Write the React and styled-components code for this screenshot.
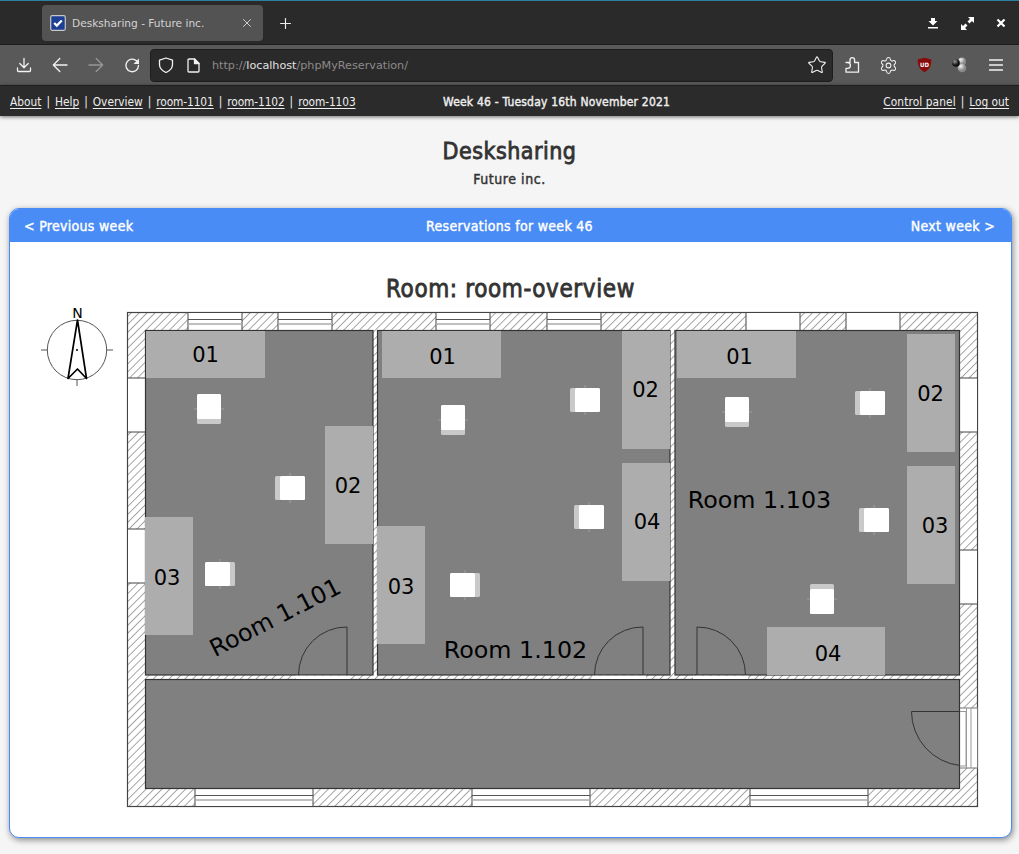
import React from "react";
import styled, { createGlobalStyle } from "styled-components";
import { X, Plus, Star, Settings } from "lucide-react";

const Global = createGlobalStyle`
  html, body { margin: 0; padding: 0; height: 100%; background: #f5f5f5; overflow: hidden; }
  body { font-family: "DejaVu Sans Condensed", "DejaVu Sans", sans-serif; font-stretch: condensed; }
`;
const Page = styled.div`display: flex; flex-direction: column; width: 1019px; height: 854px; overflow: hidden;`;
const TopLine = styled.div`height: 1px; background: #2d7f9f;`;
const TabStrip = styled.div`
  height: 44px; background: #2b2a2a; display: flex; align-items: center; padding: 0 1px 0 42px; flex-shrink: 0; box-sizing: border-box;
  border-bottom: 1px solid #1d1d1d;
`;
const Tab = styled.div`
  width: 221px; height: 36px; margin-top: 1px; background: #535353; border-radius: 4px; display: flex; align-items: center; padding: 0 9px 0 8px;
  box-sizing: border-box; color: #d4d4d4; font: 10.6px "DejaVu Sans", sans-serif;
`;
const TabTitle = styled.span`margin-left: 6px; flex: 1; white-space: nowrap;`;
const NewTab = styled.div`margin-left: 14px; margin-top: 1px; color: #eee; display: flex;`;
const WindowButtons = styled.div`margin-left: auto; margin-top: 1px; display: flex; align-items: center;`;
const WindowButton = styled.div`width: 34px; display: flex; justify-content: center;`;
const Toolbar = styled.div`
  height: 40px; background: #595959; display: flex; align-items: center; padding: 0 6px; flex-shrink: 0; color: #f2f2f2; box-sizing: border-box;
`;
const ToolButton = styled.div`
  width: ${(p) => p.$w || 36}px; display: flex; justify-content: center; flex-shrink: 0; opacity: ${(p) => (p.$dim ? 0.4 : 1)};
`;
const UrlBar = styled.div`
  width: 683px; height: 33px; box-sizing: border-box; background: #2b2a2a; border: 1px solid #1d1d1d; border-radius: 4px;
  display: flex; align-items: center; padding: 0 5px 0 6px; color: #f2f2f2; flex-shrink: 0;
`;
const UrlText = styled.span`
  margin-left: 1px; flex: 1; font: 11.2px "DejaVu Sans", sans-serif; color: #8b8b8b; white-space: nowrap;
  b { color: #e2e2e2; font-weight: 400; }
`;
const Extensions = styled.div`display: flex; align-items: center; margin-left: 1px;`;
const NavBar = styled.header`
  height: 31px; background: #2b2b2b; color: #eee; display: grid; grid-template-columns: 433px auto 1fr; align-items: center; padding: 2px 10px 0;
  font-size: 11.8px; box-shadow: 0 1px 4px rgba(0,0,0,.55); flex-shrink: 0; border-top: 1px solid #1d1d1d; box-sizing: border-box; position: relative;
`;
const NavGroup = styled.nav`display: flex; gap: 5px; justify-content: ${(p) => (p.$end ? "flex-end" : "flex-start")}; white-space: nowrap;`;
const NavLink = styled.a`color: #eee; text-decoration: underline; text-underline-offset: 2px; letter-spacing: ${(p) => p.$track || 0}px;`;
const NavCenter = styled.div`font-size: 12px; letter-spacing: .2px; -webkit-text-stroke: .4px currentColor; white-space: nowrap;`;
const Heading = styled.div`text-align: center; color: #333; padding-top: 21px; height: 92px; box-sizing: border-box; flex-shrink: 0;`;
const Title = styled.h1`margin: 0; font-size: 23px; line-height: 28px; font-weight: 400; letter-spacing: .5px; -webkit-text-stroke: .8px currentColor;`;
const Subtitle = styled.h2`margin: 5px 0 0; font-size: 14px; line-height: 18px; font-weight: 400; letter-spacing: .55px; -webkit-text-stroke: .45px currentColor;`;
const Card = styled.section`
  margin: 0 7px 0 9px; height: 630px; background: #fff; border: 1.5px solid #4a8cf5; border-radius: 10px; overflow: hidden; flex-shrink: 0;
  box-shadow: 1px 2px 6px rgba(0,0,0,.45); box-sizing: border-box; display: flex; flex-direction: column;
`;
const CardBar = styled.div`
  height: 33px; background: #4a8cf5; color: #fff; display: grid; grid-template-columns: 1fr auto 1fr; align-items: center; padding: 0 16px 0 14px;
  font-size: 14px; letter-spacing: .3px; -webkit-text-stroke: .4px currentColor; flex-shrink: 0;
`;
const BarRight = styled.span`text-align: right;`;
const RoomTitle = styled.h3`margin: 33px 0 0; text-align: center; font-size: 24px; line-height: 28px; font-weight: 400; letter-spacing: .6px; -webkit-text-stroke: .8px currentColor; color: #333;`;
const Plan = styled.svg`display: block; width: 945px; height: 510px; margin: 2px 0 0 29.500px; flex-shrink: 0; font-stretch: normal;`;

const outerX = 127.5, outerY = 312.5, outerW = 850, outerH = 494;
const rooms = [
  [145.5, 330.5, 227.5, 344.5],
  [377.5, 330.5, 292.5, 344.5],
  [675, 330.5, 284.5, 344.5],
  [145.5, 679.5, 814, 109],
];
const glazedTop = [[188, 54], [278, 54], [436, 54], [547, 54]];
const plainTop = [[746, 54], [846, 54]];
const glazedBottom = [[195, 118], [472, 118], [750, 118]];
const plainLeft = [378, 529];
const plainRight = [378, 550];
const desks = [
  [146, 331, 119, 47, "01", 205.5, 362], [325, 426, 48, 118, "02", 348, 493], [145, 517, 48, 118, "03", 167, 585],
  [382, 331, 119, 47, "01", 442.5, 364], [622, 331, 48, 118, "02", 645.5, 397], [377, 526, 48, 118, "03", 401, 594], [622, 463, 48, 118, "04", 647, 529],
  [677, 331, 119, 47, "01", 739.5, 364], [907, 334, 48, 118, "02", 930.5, 401], [907, 466, 48, 118, "03", 935, 533], [767, 627, 118, 48, "04", 828, 661],
];
const chairs = [
  [197, 394, "b"], [275, 476, "l"], [205, 562, "r"], [441, 405, "b"], [570, 388, "l"], [574, 505, "l"], [450, 573, "r"],
  [725, 397, "b"], [855, 391, "l"], [859, 508, "l"], [810, 584, "t"],
];
const doors = [
  [296, 54, "M298.5 675 A48 48 0 0 1 347 627 V675"],
  [592, 54, "M594.5 675 A48 48 0 0 1 643 627 V675"],
  [693, 55, "M697 675 V627 A48 48 0 0 1 745.5 675"],
];

function Chair({ x, y, side }) {
  const horizontal = side === "l" || side === "r";
  const w = horizontal ? 30 : 24, h = horizontal ? 24 : 30;
  const inner = side === "b" ? [x, y, 24, 25] : side === "t" ? [x, y + 5, 24, 25] : side === "l" ? [x + 5, y, 25, 24] : [x, y, 25, 24];
  const ticks = horizontal
    ? `M${x + 15} ${y - 3}v3M${x + 15} ${y + 24}v3`
    : `M${x - 3} ${y + 15}h3M${x + 24} ${y + 15}h3`;
  return (
    <g>
      <path d={ticks} stroke="#a5a5a5" strokeWidth=".8" />
      <rect x={x} y={y} width={w} height={h} rx="1.5" fill="#c9c9c9" />
      <rect x={inner[0]} y={inner[1]} width={inner[2]} height={inner[3]} rx="1.5" fill="#fff" />
    </g>
  );
}

function GlazedH({ x, w, y }) {
  return (
    <g>
      <rect x={x} y={y} width={w} height="18" fill="#fff" stroke="#444" strokeWidth="1" />
      <path d={`M${x} ${y + 7}H${x + w}`} stroke="#555" strokeWidth="1" />
      <path d={`M${x} ${y + 11.5}H${x + w}`} stroke="#aaa" strokeWidth="1.4" />
    </g>
  );
}

function FloorPlan() {
  return (
    <Plan viewBox="40 305 945 510" role="img" aria-label="Floor plan">
      <defs>
        <pattern id="hatch" width="5.6" height="5.6" patternUnits="userSpaceOnUse" patternTransform="rotate(45)">
          <rect width="5.6" height="5.6" fill="#fff" />
          <path d="M0 0V5.6" stroke="#777" strokeWidth="1.3" />
        </pattern>
      </defs>
      <g stroke="#555" fill="none" strokeWidth="1">
        <circle cx="77" cy="350" r="29.7" />
        <path d="M41 350H47.500M107 350H113M77 380V386" />
      </g>
      <path d="M77.500 320 L68 378.500 L77.500 369 L86.500 378.500 Z" fill="#fff" stroke="#000" strokeWidth="1.7" strokeLinejoin="round" />
      <circle cx="77" cy="350" r="1" fill="#000" />
      <text x="77.500" y="318" textAnchor="middle" fontFamily="DejaVu Sans" fontSize="14" fill="#000">N</text>

      <rect x={outerX} y={outerY} width={outerW} height={outerH} fill="url(#hatch)" stroke="#444" strokeWidth="1.2" />
      {glazedTop.map(([x, w]) => <GlazedH key={x} x={x} w={w} y={312.5} />)}
      {plainTop.map(([x, w]) => <rect key={x} x={x} y="312.5" width={w} height="18" fill="#fff" stroke="#444" />)}
      {glazedBottom.map(([x, w]) => <GlazedH key={x} x={x} w={w} y={788.5} />)}
      {plainLeft.map((y) => <rect key={y} x="127.5" y={y} width="18" height="54" fill="#fff" stroke="#444" />)}
      {plainRight.map((y) => <rect key={y} x="959.5" y={y} width="18" height="54" fill="#fff" stroke="#444" />)}
      <rect x="959.5" y="708" width="18" height="60" fill="#fff" stroke="#777" />
      <path d="M966.5 708V768M971 708V768" stroke="#999" fill="none" />

      {rooms.map(([x, y, w, h]) => <rect key={x + "" + y} x={x} y={y} width={w} height={h} fill="#808080" stroke="#333" strokeWidth="1.2" />)}
      {doors.map(([x, w]) => <rect key={x} x={x} y="675.8" width={w} height="3.2" fill="#fff" />)}
      {desks.map(([x, y, w, h]) => <rect key={x + "-" + y} x={x} y={y} width={w} height={h} fill="#adadad" />)}
      {chairs.map(([x, y, s]) => <Chair key={x} x={x} y={y} side={s} />)}
      <g fill="none" stroke="#333" strokeWidth="1">
        {doors.map(([x, , d]) => <path key={x} d={d} />)}
        <path d="M911.5 711.5H960M911.5 711.500A54.500 54.500 0 0 0 960 765.500" />
      </g>
      <path d="M960 711.500H966V766H960" fill="none" stroke="#999" />
      <g fontFamily="DejaVu Sans" fontSize="21" textAnchor="middle" fill="#000">
        {desks.map(([x, y, , , label, tx, ty]) => <text key={x + "t" + y} x={tx} y={ty}>{label}</text>)}
      </g>
      <g fontFamily="DejaVu Sans" fontSize="23.8" fill="#000">
        <text x="275" y="625.500" textAnchor="middle" transform="rotate(-27 275 617)">Room 1.101</text>
        <text x="515.500" y="658" textAnchor="middle">Room 1.102</text>
        <text x="759.500" y="508" textAnchor="middle">Room 1.103</text>
      </g>
    </Plan>
  );
}

const Favicon = () => (
  <svg width="16" height="16" viewBox="0 0 16 16"><rect x=".7" y=".7" width="14.600" height="14.600" rx="1.500" fill="#1c3f94" stroke="#c8c8c8" strokeWidth="1.200" /><path d="M4.200 8l2.600 2.600L11.800 5.500" stroke="#fff" strokeWidth="2.200" fill="none" /></svg>
);
const PinIcon = () => (
  <svg width="12" height="12" viewBox="0 0 12 12" fill="#fff"><path d="M4 1h4v3h2.500L6 8.500 1.500 4H4zM1 10h10v1.600H1z" /></svg>
);
const ExpandIcon = () => (
  <svg width="13" height="13" viewBox="0 0 13 13" fill="#fff"><path d="M7 0h6v6l-2-2-2.500 2.500-2-2L9 2zM6 13H0V7l2 2 2.500-2.500 2 2L4 11z" /></svg>
);
const CloseIcon = () => (
  <svg width="10" height="10" viewBox="0 0 10 10"><path d="M1.500 1.500l7 7M8.500 1.500l-7 7" stroke="#fff" strokeWidth="2.200" /></svg>
);
const LineIcon = ({ w = 16, h = 16, children, sw = 1.3 }) => (
  <svg width={w} height={h} viewBox={`0 0 ${w} ${h}`} fill="none" stroke="currentColor" strokeWidth={sw} strokeLinecap="round" strokeLinejoin="round">{children}</svg>
);
const DownloadIcon = () => <LineIcon><path d="M8 1.500V10.500M3.800 6.500L8 10.800l4.200-4.300M1.500 11v2.500a1 1 0 0 0 1 1h11a1 1 0 0 0 1-1V11" /></LineIcon>;
const BackIcon = () => <LineIcon><path d="M1.500 8H15M7.800 1.500L1.300 8l6.500 6.500" /></LineIcon>;
const ForwardIcon = () => <LineIcon><path d="M14.500 8H1M8.200 1.500L14.700 8l-6.500 6.500" /></LineIcon>;
const ReloadIcon = () => (
  <LineIcon><path d="M12.500 3.800A6.300 6.300 0 1 0 14.500 8.500" /><path d="M15 1.500V7H9.500Z" fill="currentColor" stroke="none" /></LineIcon>
);
const ShieldIcon = () => <LineIcon><path d="M8 1L14.500 3.200V7.500C14.500 11.500 11.500 14 8 15.500 4.500 14 1.500 11.500 1.500 7.500V3.200Z" /></LineIcon>;
const PageIcon = () => (
  <LineIcon w={13} h={15}><path d="M1 2a1 1 0 0 1 1-1h5.500L12 5.500V13a1 1 0 0 1-1 1H2a1 1 0 0 1-1-1z" /><path d="M7.500 1V5.500H12Z" fill="currentColor" /></LineIcon>
);
const PuzzleIcon = () => (
  <LineIcon w={15} h={16}><path d="M1 5.500H5V3a2.300 2.300 0 0 1 4.600 0V5.500H13.500V15.200H1V11.300H2.500A2.900 2.900 0 0 0 2.500 5.500Z" /></LineIcon>
);
const MenuIcon = () => <LineIcon w={14} h={14}><path d="M.5 2h13M.5 7h13M.5 12h13" /></LineIcon>;
const UBlock = () => (
  <svg width="15" height="16" viewBox="0 0 15 16"><path d="M7.500 .8L14.300 2.500c0 6-1.500 9.800-6.800 12.700C2.200 12.300.7 8.500.7 2.500z" fill="#880a0a" /><text x="7.500" y="9.500" textAnchor="middle" fontSize="6" fontWeight="700" fill="#fff" fontFamily="DejaVu Sans">UD</text></svg>
);
const Balls = () => (
  <svg width="18" height="18" viewBox="0 0 18 18"><defs><radialGradient id="b1" cx=".35" cy=".3"><stop offset="0" stopColor="#f2f2f2" /><stop offset="1" stopColor="#8a8a8a" /></radialGradient><radialGradient id="b2" cx=".35" cy=".3"><stop offset="0" stopColor="#999" /><stop offset="1" stopColor="#111" /></radialGradient></defs><circle cx="11" cy="5.500" r="4" fill="url(#b1)" /><circle cx="11" cy="12" r="4.300" fill="url(#b1)" /><circle cx="5" cy="7" r="3.800" fill="url(#b2)" /></svg>
);

const navLinks = [
  ["About", 0], ["Help", 0], ["Overview", 0], ["room-1101", -0.1], ["room-1102", -0.1], ["room-1103", -0.1],
];

export default function App() {
  return (
    <Page>
      <Global />
      <TopLine />
      <TabStrip>
        <Tab>
          <Favicon />
          <TabTitle>Desksharing - Future inc.</TabTitle>
          <X size={14} color="#ddd" strokeWidth={1.5} />
        </Tab>
        <NewTab><Plus size={17} strokeWidth={1.6} /></NewTab>
        <WindowButtons>
          <WindowButton><PinIcon /></WindowButton>
          <WindowButton><ExpandIcon /></WindowButton>
          <WindowButton><CloseIcon /></WindowButton>
        </WindowButtons>
      </TabStrip>
      <Toolbar>
        <ToolButton><DownloadIcon /></ToolButton>
        <ToolButton><BackIcon /></ToolButton>
        <ToolButton $dim><ForwardIcon /></ToolButton>
        <ToolButton><ReloadIcon /></ToolButton>
        <UrlBar>
          <ToolButton $w={18}><ShieldIcon /></ToolButton>
          <ToolButton $w={36}><PageIcon /></ToolButton>
          <UrlText>http://<b>localhost</b>/phpMyReservation/</UrlText>
          <Star size={20} strokeWidth={1.3} />
        </UrlBar>
        <Extensions>
          <ToolButton><PuzzleIcon /></ToolButton>
          <ToolButton><Settings size={19} strokeWidth={1.3} /></ToolButton>
          <ToolButton><UBlock /></ToolButton>
          <ToolButton><Balls /></ToolButton>
          <ToolButton><MenuIcon /></ToolButton>
        </Extensions>
      </Toolbar>
      <NavBar>
        <NavGroup>
          {navLinks.map(([t, track], i) => (
            <React.Fragment key={t}>{i > 0 && <span>|</span>}<NavLink $track={track}>{t}</NavLink></React.Fragment>
          ))}
        </NavGroup>
        <NavCenter>Week 46 - Tuesday 16th November 2021</NavCenter>
        <NavGroup $end><NavLink $track={0.1}>Control panel</NavLink><span>|</span><NavLink>Log out</NavLink></NavGroup>
      </NavBar>
      <Heading>
        <Title>Desksharing</Title>
        <Subtitle>Future inc.</Subtitle>
      </Heading>
      <Card>
        <CardBar><span>&lt; Previous week</span><span>Reservations for week 46</span><BarRight>Next week &gt;</BarRight></CardBar>
        <RoomTitle>Room: room-overview</RoomTitle>
        <FloorPlan />
      </Card>
    </Page>
  );
}
